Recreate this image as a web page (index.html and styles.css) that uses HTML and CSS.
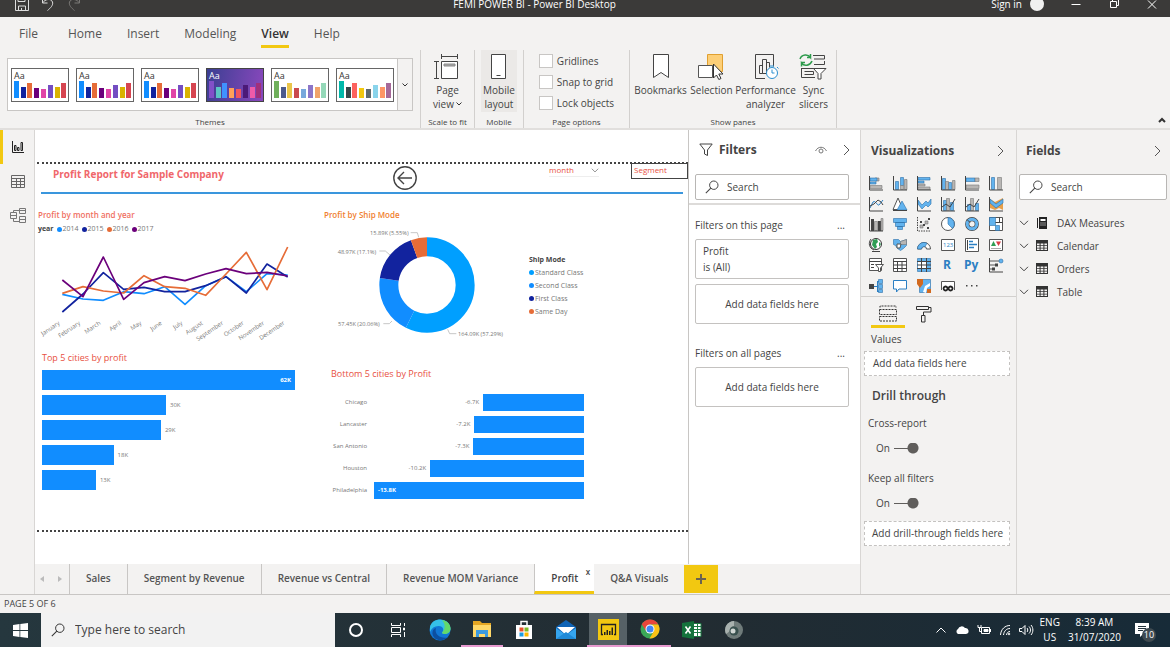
FILE: index.html
```html
<!DOCTYPE html>
<html lang="en">
<head>
<meta charset="utf-8">
<meta name="viewport" content="width=device-width, initial-scale=1">
<title>FEMI POWER BI - Power BI Desktop</title>
<link rel="stylesheet" href="styles.css">
</head>
<body>
<svg class="defs" aria-hidden="true">
  <symbol id="theme-default" viewBox="0 0 56 31"><path fill="#118dff" d="M2 12h5v17H2z"/><path fill="#12239e" d="M9 18h5v11H9z"/><path fill="#e66c37" d="M15 14h5v15h-5z"/><path fill="#6b007b" d="M22 19h5v10h-5z"/><path fill="#e044a7" d="M29 20h5v9h-5z"/><path fill="#744ec2" d="M36 16h5v13h-5z"/><path fill="#d9b300" d="M43 18h5v11h-5z"/><path fill="#d64550" d="M49 14h5v15h-5z"/></symbol>
  <symbol id="chev-right" viewBox="0 0 8 12"><path d="M1 1l5 5-5 5" fill="none" stroke="#555" stroke-width="1"/></symbol>
  <symbol id="chev-down" viewBox="0 0 10 6"><path d="M1 .8l4 4 4-4" fill="none" stroke="currentColor" stroke-width="1"/></symbol>
  <symbol id="lens" viewBox="0 0 14 14"><circle cx="8.8" cy="5.2" r="4.2" fill="none" stroke="currentColor" stroke-width="1"/><path d="M5.8 8.2L.8 13.2" stroke="currentColor" stroke-width="1.1"/></symbol>
  <symbol id="sheet" viewBox="0 0 12 11"><path fill="#333" d="M0 0h12v11H0z"/><path fill="#f3f2f1" d="M1 3.400h2.600v1.800H1zM4.600 3.400h2.800v1.800H4.600zM8.400 3.400H11v1.800H8.400zM1 6h2.600v1.700H1zM4.600 6h2.800v1.700H4.600zM8.400 6H11v1.700H8.400zM1 8.500h2.600V10H1zM4.600 8.500h2.800V10H4.600zM8.400 8.500H11V10H8.400z"/></symbol>
</svg>

<header class="titlebar">
  <div class="quick">
    <button aria-label="Save"><svg width="14" height="14" viewBox="0 0 14 14" fill="none" stroke="#ddd"><path d="M.5.500h11l2 2v11H.5zM3 .5v4h7v-4M3.500 13.500V9h7v4.500M6.500 11v2.500"/></svg></button>
    <button aria-label="Undo"><svg width="14" height="14" viewBox="0 0 14 14" fill="none" stroke="#ddd"><path d="M1.500 1v5h5M1.500 6C4 2 10 1 11.500 5c1 3-2 6-5 8.500"/></svg></button>
    <button aria-label="Redo"><svg width="14" height="14" viewBox="0 0 14 14" fill="none" stroke="#7a7876"><path d="M12.500 1v5h-5M12.500 6C10 2 4 1 2.500 5c-1 3 2 6 5 8.500"/></svg></button>
  </div>
  <h1 class="app-title">FEMI POWER BI - Power BI Desktop</h1>
  <div class="window">
    <a href="#signin">Sign in</a><span class="avatar"></span>
    <button aria-label="Minimize"><svg width="12" height="12" viewBox="0 0 12 12" fill="none" stroke="#fff"><path d="M1.500 6.500h9"/></svg></button>
    <button aria-label="Restore"><svg width="12" height="12" viewBox="0 0 12 12" fill="none" stroke="#fff"><path d="M2.500 3.500h6v6h-6zM4.500 3V1.500h6v6H9"/></svg></button>
    <button aria-label="Close"><svg width="12" height="12" viewBox="0 0 12 12" fill="none" stroke="#fff"><path d="M2 2.500l8 8M10 2.500l-8 8"/></svg></button>
  </div>
</header>

<nav class="menu">
  <a href="#file" class="file">File</a><a href="#home">Home</a><a href="#insert">Insert</a><a href="#modeling">Modeling</a><a href="#view" class="active">View</a><a href="#help">Help</a>
</nav>

<section class="ribbon">
  <div class="group themes">
    <div class="gallery">
      <button class="theme"><span>Aa</span><svg><use href="#theme-default"/></svg></button>
      <button class="theme"><span>Aa</span><svg><use href="#theme-default"/></svg></button>
      <button class="theme"><span>Aa</span><svg><use href="#theme-default"/></svg></button>
      <button class="theme purple"><span>Aa</span><svg viewBox="0 0 56 31"><path fill="#8250c8" d="M2 12h5v17H2z"/><path fill="#5cc5c5" d="M9 18h5v11H9z"/><path fill="#4092ff" d="M15 14h5v15h-5z"/><path fill="#ffa058" d="M22 19h5v10h-5z"/><path fill="#f0555e" d="M29 20h5v9h-5z"/><path fill="#4b1a78" d="M36 16h5v13h-5z"/><path fill="#ef5ba9" d="M43 18h5v11h-5z"/><path fill="#a0307c" d="M49 14h5v15h-5z"/></svg></button>
      <button class="theme"><span>Aa</span><svg viewBox="0 0 56 31"><path fill="#70b05c" d="M2 12h5v17H2z"/><path fill="#4c5a8c" d="M9 18h5v11H9z"/><path fill="#eac54a" d="M15 14h5v15h-5z"/><path fill="#c94a4e" d="M22 19h5v10h-5z"/><path fill="#77a8dc" d="M29 20h5v9h-5z"/><path fill="#8c75c8" d="M36 16h5v13h-5z"/><path fill="#f0a36a" d="M43 18h5v11h-5z"/><path fill="#94d8b8" d="M49 14h5v15h-5z"/></svg></button>
      <button class="theme"><span>Aa</span><svg viewBox="0 0 56 31"><path fill="#01b8aa" d="M2 12h5v17H2z"/><path fill="#374649" d="M9 18h5v11H9z"/><path fill="#fd625e" d="M15 14h5v15h-5z"/><path fill="#f2c80f" d="M22 19h5v10h-5z"/><path fill="#5f6b6d" d="M29 20h5v9h-5z"/><path fill="#8ad4eb" d="M36 16h5v13h-5z"/><path fill="#fe9666" d="M43 18h5v11h-5z"/><path fill="#a66999" d="M49 14h5v15h-5z"/></svg></button>
      <button class="more" aria-label="More themes"><svg width="6" height="4" viewBox="0 0 6 4"><path d="M.5.500L3 3 5.500.500" fill="none" stroke="#333"/></svg></button>
    </div>
    <div class="caption">Themes</div>
  </div>
  <div class="group scale">
    <button class="tool"><svg width="26" height="26" viewBox="0 0 26 26" fill="none" stroke="#444"><path d="M7 2.500h17M7.500 0v5M23.500 0v5M2.500 7v17M0 7.500h5M0 24.500h5"/><path fill="#fff" d="M7.500 7.500h16v17h-16z"/><path fill="#aaa" stroke="#888" d="M10 10h11v2H10z"/></svg>Page<br><span>view <svg width="6" height="4" viewBox="0 0 6 4"><path d="M.5.500L3 3 5.500.500" fill="none" stroke="#333"/></svg></span></button>
    <div class="caption">Scale to fit</div>
  </div>
  <div class="group mobile">
    <button class="tool shade"><svg width="16" height="26" viewBox="0 0 16 26" fill="#fff" stroke="#444"><path d="M.5.500h14v24H.5zM5.500 21.500h4"/></svg>Mobile<br>layout</button>
    <div class="caption">Mobile</div>
  </div>
  <div class="group options">
    <div class="checks">
      <label><input type="checkbox">Gridlines</label>
      <label><input type="checkbox">Snap to grid</label>
      <label><input type="checkbox">Lock objects</label>
    </div>
    <div class="caption">Page options</div>
  </div>
  <div class="group panes">
    <div class="tools">
      <button class="tool"><svg width="16" height="26" viewBox="0 0 16 26" fill="#fff" stroke="#444"><path d="M.5.500h15v23L8 18.500.5 23.500z"/></svg>Bookmarks</button>
      <button class="tool"><svg width="26" height="26" viewBox="0 0 26 26"><path fill="#fdcf77" stroke="#e0a030" d="M9.500.500h15v17h-15z"/><path fill="#fff" stroke="#555" d="M.5 11.500h14v12H.5z"/><path fill="#fff" stroke="#333" d="M15.500 10v14l3-3 2.300 4.500 2.200-1-2.200-4.500h4.200z"/></svg>Selection</button>
      <button class="tool"><svg width="26" height="26" viewBox="0 0 26 26" fill="none" stroke="#444"><path d="M12 24.500H2.500V.500h18v12"/><path d="M6.500 11.500h3v8h-3zM9.500 5.500h4v14h-4zM13.500 8.500h3v5"/><g stroke="#2b8fd0"><circle cx="19" cy="19" r="5.500" fill="#fff"/><path d="M19 15.500V19h2.500M17 12h4M24 13l1.500 1.500"/></g></svg>Performance<br>analyzer</button>
      <button class="tool"><svg width="28" height="26" viewBox="0 0 28 26" fill="none" stroke="#444"><path d="M14 1.500h11.500v3.500H15M15 10.500h10.500V7M2.500 14v9.500H16M2.500 14.500h14M5.500 17.500h9v3h-9"/><path fill="#fff" d="M14.500 14.500h12.500l-5 5v5.500h-3v-5.500z"/><g stroke="#2d9b4c" stroke-width="1.500"><path d="M1 5C3 0 9 0 11.500 3.500V0M11.500 3.500H8M13 7c-2 5-8 5.500-10.500 2V12.500M2.500 8.500H6"/></g></svg>Sync<br>slicers</button>
    </div>
    <div class="caption">Show panes</div>
  </div>
  <button class="collapse" aria-label="Collapse the ribbon"><svg width="8" height="6" viewBox="0 0 8 6"><path d="M1 5l3-3 3 3" fill="none" stroke="#333" stroke-width="2"/></svg></button>
</section>

<main class="workspace">
  <nav class="rail">
    <button class="active" aria-label="Report"><svg width="12" height="12" viewBox="0 0 12 12" fill="none" stroke="#222"><path d="M.5 0v11.500H12M2.500 4.500h1.500v5H2.500zM5.500 6.500H7v3H5.500zM9 1.500h1.500v8H9z"/></svg></button>
    <button aria-label="Data"><svg width="14" height="13" viewBox="0 0 14 13" fill="none" stroke="#666"><path d="M.5.500h13v12H.5zM0 3.500h14M0 6.500h14M0 9.500h14M5.500 3v10M9.500 3v10"/></svg></button>
    <button aria-label="Model"><svg width="16" height="15" viewBox="0 0 16 15" fill="none" stroke="#777"><path d="M.5 4.500h6v6h-6zM.5 7.500h6M9.500.500h6v5h-6zM9.500 2.500h6M9.500 8.500h6v6h-6zM9.500 11.500h6M3.500 4V2.500h6M3.500 11v2.500h6"/></svg></button>
  </nav>

  <div class="center">
    <div class="stage">
      <section class="canvas">
        <div class="page">
          <div class="report-head">
            <h2>Profit Report for Sample Company</h2>
            <button class="back" aria-label="Back"><svg width="24" height="24" viewBox="0 0 24 24" fill="none" stroke="#444" stroke-width="1.400"><circle cx="12" cy="12" r="11.200"/><path d="M19 12H5.500M11 6l-6 6 6 6"/></svg></button>
            <button class="month">month<svg width="8" height="5"><use href="#chev-down"/></svg></button>
            <div class="segment">Segment</div>
          </div>
          <div class="report-grid">
            <div class="col">
              <section class="visual lines">
                <h3>Profit by month and year</h3>
                <div class="legend"><b>year</b><span><i class="c1"></i>2014</span><span><i class="c3"></i>2015</span><span><i class="c4"></i>2016</span><span><i class="c5"></i>2017</span></div>
                <svg width="252" height="103" viewBox="114 330 756 309" role="img" aria-label="Profit by month and year">
                  <g fill="none" stroke-width="5" stroke-linejoin="round">
                    <path stroke="#118dff" d="M187 493L249 507 310 511 371 485 432 491 494 470 555 523 617 467 678 440 739 485 801 431 863 435"/>
                    <path stroke="#12239e" d="M187 546L249 492 310 428 371 478 432 472 494 485 555 485 617 467 678 440 739 489 801 402 863 441"/>
                    <path stroke="#e66c37" d="M187 490L249 470 310 483 371 489 432 437 494 470 555 475 617 496 678 432 739 367 801 479 863 351"/>
                    <path stroke="#6b007b" d="M187 450L249 500 310 381 371 508 432 458 494 440 555 452 617 432 678 416 739 431 801 427 863 438"/>
                  </g>
                  <g class="months">
                    <text transform="translate(181 582) rotate(-34)">January</text><text transform="translate(242 582) rotate(-34)">February</text><text transform="translate(303 582) rotate(-34)">March</text><text transform="translate(365 582) rotate(-34)">April</text><text transform="translate(426 582) rotate(-34)">May</text><text transform="translate(487 582) rotate(-34)">June</text><text transform="translate(549 582) rotate(-34)">July</text><text transform="translate(610 582) rotate(-34)">August</text><text transform="translate(671 582) rotate(-34)">September</text><text transform="translate(733 582) rotate(-34)">October</text><text transform="translate(794 582) rotate(-34)">November</text><text transform="translate(855 582) rotate(-34)">December</text>
                  </g>
                </svg>
              </section>
              <section class="visual top5">
                <h3>Top 5 cities by profit</h3>
                <div class="bar-row"><div class="bar" style="width:100%"><b>62K</b></div></div>
                <div class="bar-row"><div class="bar" style="width:49%"></div><span>30K</span></div>
                <div class="bar-row"><div class="bar" style="width:47%"></div><span>29K</span></div>
                <div class="bar-row"><div class="bar" style="width:28.300%"></div><span>18K</span></div>
                <div class="bar-row"><div class="bar" style="width:21.300%"></div><span>13K</span></div>
              </section>
            </div>
            <div class="col">
              <section class="visual ship">
                <h3>Profit by Ship Mode</h3>
                <div class="ship-body">
                  <svg width="184" height="120" viewBox="12 222 552 360" role="img" aria-label="Profit by Ship Mode">
                    <g fill="none" stroke-width="57" transform="rotate(-90 321 405)">
                      <circle cx="321" cy="405" r="114.500" pathLength="100" stroke="#009fff" stroke-dasharray="57.29 100"/>
                      <circle cx="321" cy="405" r="114.500" pathLength="100" stroke="#118dff" stroke-dasharray="20.06 100" stroke-dashoffset="-57.29"/>
                      <circle cx="321" cy="405" r="114.500" pathLength="100" stroke="#12239e" stroke-dasharray="17.1 100" stroke-dashoffset="-77.35"/>
                      <circle cx="321" cy="405" r="114.500" pathLength="100" stroke="#e66c37" stroke-dasharray="5.55 100" stroke-dashoffset="-94.45"/>
                    </g>
                    <path fill="none" stroke="#aaa" stroke-width="2" d="M272 248h20l4 14M178 303h18l14 12M190 521h18l8-8M383 538l6 13h20"/>
                    <g class="callouts"><text x="150" y="255">15.89K (5.55%)</text><text x="53" y="312">48.97K (17.1%)</text><text x="54" y="528">57.45K (20.06%)</text><text x="414" y="558">164.09K (57.29%)</text></g>
                  </svg>
                  <div class="ship-legend"><b>Ship Mode</b><span><i class="c0"></i>Standard Class</span><span><i class="c1"></i>Second Class</span><span><i class="c3"></i>First Class</span><span><i class="c4"></i>Same Day</span></div>
                </div>
              </section>
              <section class="visual bottom5">
                <h3>Bottom 5 cities by Profit</h3>
                <div class="neg-row"><span class="city">Chicago</span><div><span>-6.7K</span><div class="bar" style="width:48%"></div></div></div>
                <div class="neg-row"><span class="city">Lancaster</span><div><span>-7.2K</span><div class="bar" style="width:52.200%"></div></div></div>
                <div class="neg-row"><span class="city">San Antonio</span><div><span>-7.3K</span><div class="bar" style="width:52.700%"></div></div></div>
                <div class="neg-row"><span class="city">Houston</span><div><span>-10.2K</span><div class="bar" style="width:73.300%"></div></div></div>
                <div class="neg-row"><span class="city">Philadelphia</span><div><div class="bar" style="width:100%"><b>-13.8K</b></div></div></div>
              </section>
            </div>
          </div>
        </div>
      </section>

      <aside class="filters">
        <div class="pane-head"><svg width="14" height="14" viewBox="0 0 14 14" fill="none" stroke="#444"><path d="M.8 1h12.400L8.500 7v5.500l-3-1.500V7z"/></svg><h2>Filters</h2><button aria-label="Show pane to readers"><svg width="12" height="8" viewBox="0 0 12 8" fill="none" stroke="#777"><path d="M.5 5C3 0 9 0 11.500 5"/><circle cx="6" cy="5" r="2"/></svg></button><button aria-label="Collapse filters"><svg width="8" height="12"><use href="#chev-right"/></svg></button></div>
        <label class="search"><svg width="14" height="14"><use href="#lens"/></svg><input type="text" placeholder="Search" aria-label="Search filters"></label>
        <hr>
        <div class="filter-title">Filters on this page<button aria-label="More">...</button></div>
        <div class="card">Profit<br>is (All)</div>
        <div class="card drop">Add data fields here</div>
        <div class="filter-title second">Filters on all pages<button aria-label="More">...</button></div>
        <div class="card drop">Add data fields here</div>
      </aside>
    </div>
    <nav class="pages">
      <span class="arrows"><button aria-label="Previous"><svg width="4" height="6" viewBox="0 0 4 6"><path fill="#bbb" d="M4 0v6L0 3z"/></svg></button><button aria-label="Next"><svg width="4" height="6" viewBox="0 0 4 6"><path fill="#bbb" d="M0 0v6l4-3z"/></svg></button></span>
      <a href="#p1">Sales</a><a href="#p2">Segment by Revenue</a><a href="#p3">Revenue vs Central</a><a href="#p4">Revenue MOM Variance</a><a href="#p5" class="active">Profit<span class="close">x</span></a><a href="#p6">Q&amp;A Visuals</a>
      <button class="add" aria-label="New page"><svg width="10" height="10" viewBox="0 0 10 10"><path stroke="#6b6350" stroke-width="2" d="M5 0v10M0 5h10"/></svg></button>
    </nav>
  </div>

  <aside class="viz">
    <div class="pane-head"><h2>Visualizations</h2><button aria-label="Collapse visualizations"><svg width="8" height="12"><use href="#chev-right"/></svg></button></div>
    <div class="viz-grid">
      <svg viewBox="0 0 16 16"><path class="g" d="M2 10.500h12v3H2zM7 3h4v3H7z"/><path class="b" d="M2 3h7v3H2zM2 7h6v2H2z"/><path class="a" d="M1.500 1v14H15"/></svg>
      <svg viewBox="0 0 16 16"><path class="b" d="M3.500 6.500h3v8h-3zM8.500 2.500h3v8h-3z"/><path class="g" d="M8.500 10.500h3v4h-3zM12.500 4.500H15v10h-2.500z"/><path class="a" d="M1.500 1v14H15"/></svg>
      <svg viewBox="0 0 16 16"><path class="b" d="M2 2.500h12v2.500H2zM2 6h6v2H2z"/><path class="g" d="M2 9h7v2H2zM2 12h12v2.500H2z"/><path class="a" d="M1.500 1v14H15"/></svg>
      <svg viewBox="0 0 16 16"><path class="b" d="M2.500 3.500h3v11h-3zM8.500 7.500h3v7h-3z"/><path class="g" d="M5.500 6.500h3v8h-3zM12.500 5.500H15v9h-2.500z"/><path class="a" d="M1.500 1v14H15"/></svg>
      <svg viewBox="0 0 16 16"><path class="b" d="M2 3h9v3.500H2z"/><path class="g" d="M11 3h4v3.500h-4zM2 10h13v3.500H2z"/><path class="a" d="M1.500 1v14H15"/></svg>
      <svg viewBox="0 0 16 16"><path class="b" d="M3.500 2.500h3v12h-3z"/><path class="g" d="M9.500 2.500h4v12h-4z"/><path class="a" d="M1.500 1v14H15"/></svg>

      <svg viewBox="0 0 16 16"><path class="l" d="M2 12l3-6c3-2 4 4 6 3l4-5"/><path class="n" d="M2 10l4-2 4-4 3 2 2 3"/><path class="a" d="M1.500 1v14H15"/></svg>
      <svg viewBox="0 0 16 16"><path class="w" d="M1 13.500L6 2l5 11.500z"/><path class="b" d="M5 14l5-9 5 9z"/><path class="a" d="M1 14.500h14"/></svg>
      <svg viewBox="0 0 16 16"><path class="b" d="M2 4l4 5 4-4 2 2 3-4v5l-3 3-2-2-4 4-4-5z"/><path class="a" d="M1.500 1v14H15"/></svg>
      <svg viewBox="0 0 16 16"><path class="b" d="M3.500 4.500h3v10h-3zM10.500 6.500h3v8h-3z"/><path class="g" d="M6.500 2.500h3v12h-3z"/><path class="n" d="M2 11l4-3 4 3 5-8"/><path class="a" d="M1.500 1v14H15"/></svg>
      <svg viewBox="0 0 16 16"><path class="g" d="M6.500 2.500h3v12h-3z"/><path class="b" d="M3.500 8.500h3v6h-3zM11.500 7.500h3v7h-3z"/><path class="n" d="M2 11l4-3 4 3 5-8"/><path class="a" d="M1.500 1v14H15"/></svg>
      <svg viewBox="0 0 16 16"><path class="o" d="M2 3l5 3 8-4v12l-4-2-4 2-5-2z"/><path class="b" d="M2 3l6 5 7-5v4l-7 5-6-5z"/><path class="a" d="M1.500 1v14H15"/></svg>

      <svg viewBox="0 0 16 16"><path class="d" d="M3 3h3v12H3zM10 5h3v10h-3z"/><path class="g" d="M6.500 5.500h3v9h-3zM13 2.500h2v12h-2z"/><path class="a" d="M1.500 1v14H15"/></svg>
      <svg viewBox="0 0 16 16"><path class="b" d="M1.500 2.500h13v4h-13zM3.500 6.500h9v4h-9zM5.500 10.500h5v3h-5z"/></svg>
      <svg viewBox="0 0 16 16"><path class="g" d="M4 9h3v3H4zM9 5h3v3H9z"/><path class="d" d="M4 5h2v2H4zM7 8h2v2H7zM11 11h2v2h-2zM12 2h2v2h-2z"/><path class="a" d="M1.500 1v14H15" stroke-dasharray="1.500 1"/></svg>
      <svg viewBox="0 0 16 16"><circle class="w" cx="8" cy="8" r="6.500"/><path class="b" d="M8 1.500A6.500 6.500 0 0 1 12.500 12.500L8 8z"/></svg>
      <svg viewBox="0 0 16 16"><circle cx="8" cy="8" r="4.800" fill="none" stroke="#444" stroke-width="4.200"/><circle cx="8" cy="8" r="4.800" fill="none" stroke="#62b3ee" stroke-width="3"/><path d="M3 3.500l3 3" stroke="#444"/></svg>
      <svg viewBox="0 0 16 16"><path class="w" d="M1.500 1.500h13v13h-13z"/><path class="b" d="M1.500 1.500h6v8h-6zM7.500 9.500h4v5h-4z"/><path class="a" d="M7.500 6.500h7M11.500 1.500v5"/></svg>

      <svg viewBox="0 0 16 16"><circle cx="8" cy="7" r="5.500" fill="#fff" stroke="#333"/><path fill="#2f9e55" d="M5 3l4-1 1 3-2 2 1 3-2 2-3-4zM11 5l2 2-2 3z"/><path class="a" d="M4 14.500h8M3 2C0 6 1 11 6 13"/></svg>
      <svg viewBox="0 0 16 16"><path class="b" d="M1.500 2.500h5l2 2 6-2v6l-3 3-3 2-3-2-2-3-2-1z"/><path class="g" d="M8.500 4.500l6-2v5h-6z"/><path class="w" d="M5 7h4l-1 4H5z"/></svg>
      <svg viewBox="0 0 16 16"><path class="w" d="M1.500 12a6.500 6.500 0 0 1 13 0h-4a2.500 2.500 0 0 0-5 0z"/><path class="b" d="M1.500 12A6.500 6.500 0 0 1 11 6.200L9 9.800A2.500 2.500 0 0 0 5.500 12z"/></svg>
      <svg viewBox="0 0 16 16"><path class="w" d="M1.500 2.500h13v11h-13z"/><text class="num" x="3" y="10">123</text></svg>
      <svg viewBox="0 0 16 16"><path class="w" d="M1.500 1.500h13v13h-13z"/><path d="M5 4.500h4M5 7.500h8M5 10.500h5" stroke="#2b7fc3" stroke-width="1.600"/><path class="a" d="M3.500 3v10"/></svg>
      <svg viewBox="0 0 16 16"><path class="w" d="M1.500 2.500h13v11h-13z"/><path fill="#2f9e55" d="M3 9l2.500-5L8 9z"/><path fill="#d83b45" d="M8 4.500h5L10.500 9z"/><path d="M3 11.500h10" stroke="#aaa"/></svg>

      <svg viewBox="0 0 16 16"><path class="w" d="M1.500 1.500h12v12h-12z"/><path class="a" d="M1 4.500h13M3 7.500h3M3 10.500h3"/><path class="w" d="M7.500 7.500h8l-3 3.500v3.500h-2V11z"/></svg>
      <svg viewBox="0 0 16 16"><path class="w" d="M1.500 1.500h13v13h-13z"/><path class="a" d="M1 4.500h14M1 8h14M1 11.500h14M5.500 4v11M10 4v11"/></svg>
      <svg viewBox="0 0 16 16"><path class="b" d="M1.500 1.500h13v13h-13z"/><path fill="#fff" d="M2 5h8v6H2z"/><path class="a" d="M1 4.500h14M1 8h14M1 11.500h14M5.500 1v14M10.500 1v14"/></svg>
      <svg viewBox="0 0 16 16"><text class="lang" x="3" y="12">R</text></svg>
      <svg viewBox="0 0 16 16"><text class="lang" x="0" y="12">Py</text></svg>
      <svg viewBox="0 0 16 16"><path d="M2 4h10M2 8h7M2 12h4" stroke="#555"/><path class="d" d="M7 6.500h3v3H7zM4 10.500h3v3H4z"/><circle class="b" cx="13" cy="4" r="2"/><path class="a" d="M1.500 1v14H15"/></svg>

      <svg viewBox="0 0 16 16"><path class="d" d="M1 6h5v5H1z"/><path class="l" d="M6 8.500h3M9.500 3v11M9.500 3.500h2M9.500 13.500h2"/><path class="b" d="M10.500 1.500h4v4h-4zM10.500 6.500h4v4h-4zM10.500 11.500h4v3h-4z"/></svg>
      <svg viewBox="0 0 16 16"><path fill="#fff" stroke="#2b7fc3" d="M1.500 2.500h13v8.500H7L4.500 14v-3h-3z"/></svg>
      <svg viewBox="0 0 16 16"><path class="b" d="M3.500 1.500h11v13h-11z"/><path fill="#fff" d="M7 14l2-6 5-3v3l-3 2-1 5z"/><path fill="#d2691e" d="M1 1h6v5l-3 4-3-4zM11 11h4v4h-4z"/></svg>
      <svg viewBox="0 0 16 16"><path class="w" d="M1.500 12V3.500h13V12"/><path fill="none" stroke="#222" stroke-width="1.800" d="M5.500 8.500a2 2 0 1 0 .1 0zM10.500 8.500a2 2 0 1 0 .1 0z"/></svg>
      <button class="dots" aria-label="Get more visuals"><svg viewBox="0 0 16 16"><path class="d" d="M2 7h1.500v1.500H2zM7 7h1.500v1.500H7zM12 7h1.500v1.500H12z"/></svg></button>
    </div>
    <div class="viz-tabs">
      <button class="active" aria-label="Fields"><svg width="18" height="17" viewBox="0 0 18 17" fill="none" stroke="#333" stroke-dasharray="2 1"><path d="M1 2.500V1h16v1.500M.5 4.500h17v5H.5zM.5 11.500h17v4.500H.5z"/></svg></button>
      <button aria-label="Format"><svg width="16" height="18" viewBox="0 0 16 18" fill="none" stroke="#333"><path d="M.5 1.500h12v3H.5zM12.500 2.500H15v4.500H7.500v3M5.500 10.500h3.500v6.500H5.500z"/></svg></button>
    </div>
    <div class="well-title">Values</div>
    <div class="well">Add data fields here</div>
    <h2 class="drill">Drill through</h2>
    <div class="switch-title">Cross-report</div>
    <label class="switch">On<input type="checkbox" role="switch" checked></label>
    <div class="switch-title">Keep all filters</div>
    <label class="switch">On<input type="checkbox" role="switch" checked></label>
    <div class="well last">Add drill-through fields here</div>
  </aside>

  <aside class="fields">
    <div class="pane-head"><h2>Fields</h2><button aria-label="Collapse fields"><svg width="8" height="12"><use href="#chev-right"/></svg></button></div>
    <label class="search"><svg width="14" height="14"><use href="#lens"/></svg><input type="text" placeholder="Search" aria-label="Search fields"></label>
    <ul>
      <li><svg width="10" height="6"><use href="#chev-down"/></svg><svg width="12" height="12" viewBox="0 0 12 12"><path fill="#222" d="M1 1h1v10H1zM3 0h8v12H3z"/><path fill="#fff" d="M4.500 2h5v2h-5zM4.500 5.500h1v1h-1zM6.500 5.500h1v1h-1zM8.500 5.500h1v1h-1zM4.500 7.500h1v1h-1zM6.500 7.500h1v1h-1zM8.500 7.500h1v1h-1z"/></svg>DAX Measures</li>
      <li><svg width="10" height="6"><use href="#chev-down"/></svg><svg width="12" height="11"><use href="#sheet"/></svg>Calendar</li>
      <li><svg width="10" height="6"><use href="#chev-down"/></svg><svg width="12" height="11"><use href="#sheet"/></svg>Orders</li>
      <li><svg width="10" height="6"><use href="#chev-down"/></svg><svg width="12" height="11"><use href="#sheet"/></svg>Table</li>
    </ul>
  </aside>
</main>

<div class="status">PAGE 5 OF 6</div>

<footer class="taskbar">
  <button class="start" aria-label="Start"><svg width="15" height="15" viewBox="0 0 15 15" fill="#fff"><path d="M0 2l6.500-1v6H0zM7.300.9L15 0v7H7.300zM0 8h6.500v6L0 13zM7.300 8H15v7l-7.700-1z"/></svg></button>
  <label class="task-search"><svg width="14" height="14"><use href="#lens"/></svg><input type="text" placeholder="Type here to search" aria-label="Type here to search"></label>
  <div class="apps">
    <button aria-label="Cortana"><svg width="20" height="20" viewBox="0 0 20 20"><circle cx="10" cy="10" r="6" fill="none" stroke="#fff" stroke-width="2"/></svg></button>
    <button aria-label="Task view"><svg width="16" height="14" viewBox="0 0 16 14" fill="none" stroke="#fff"><path d="M1.500 0v2.500h9V0M1.500 4.500h9v5h-9zM1.500 14v-2.500h9V14M14.500 0v3M14.500 9v5"/><path fill="#fff" d="M13.500 5h1v2h-1z"/></svg></button>
    <button aria-label="Edge"><svg width="22" height="22" viewBox="0 0 22 22"><circle cx="11" cy="11" r="10.500" fill="#1177d4"/><path fill="#35c1e8" d="M1 8C3-2 20-2 21.500 9c0 4-3 6-6 6-2 0-3-1-2-2 2-3 0-6-4-6-4 0-7 2-8.500 6z"/><path fill="#63d96b" d="M13 1c6 1 8.500 5 8.500 8.500 0 4-3 5.500-6 5.500-2 0-3-1-2-2 3-3 3-8-.5-12z"/><path fill="#0c4fa0" d="M7 9c-2 6 4 11 11 9.500C14 23 5 22 3.500 15 3 11.500 5 9.500 7 9z"/></svg></button>
    <button class="open" aria-label="File Explorer"><svg width="20" height="18" viewBox="0 0 20 18"><path fill="#e5a623" d="M1 1h7l2 2h9v14H1z"/><path fill="#ffd869" d="M1 5h18v12H1z"/><path fill="#3d9be0" d="M4 10h12v7h-3v-3H7v3H4z"/></svg></button>
    <button aria-label="Store"><svg width="20" height="20" viewBox="0 0 20 20"><path fill="none" stroke="#fff" stroke-width="1.500" d="M7 5V1.500h6V5"/><path fill="#fff" d="M2 5h16v14H2z"/><path fill="#e8502a" d="M5.500 7.500h4v4h-4z"/><path fill="#7cb928" d="M10.500 7.500h4v4h-4z"/><path fill="#1b9de2" d="M5.500 12.500h4v4h-4z"/><path fill="#fbb900" d="M10.500 12.500h4v4h-4z"/></svg></button>
    <button aria-label="Mail"><svg width="22" height="20" viewBox="0 0 22 20"><path fill="#0f63b5" d="M1 7l10-7 10 7v12H1z"/><path fill="#fff" d="M2 7h18l-9 8z"/><path fill="#35a5ee" d="M1 8l10 7 10-7v11H1z"/><path fill="#1f8ad8" d="M1 19l10-7 10 7z"/></svg></button>
    <button class="open current" aria-label="Power BI Desktop"><svg width="21" height="21" viewBox="0 0 21 21"><path fill="#f2c811" d="M0 0h21v21H0z"/><path fill="none" stroke="#222" stroke-width="1.300" d="M5 15.500H3.500v-10h14v10H16"/><path fill="#222" d="M6 13h1.500v3H6zM8.500 11H10v5H8.500zM11 12h1.500v4H11zM13.500 8.500H15V16h-1.500z"/></svg></button>
    <button class="open" aria-label="Chrome"><svg width="20" height="20" viewBox="0 0 20 20"><circle cx="10" cy="10" r="9.500" fill="#3ba757"/><path fill="#e8453c" d="M1.800 5.300A9.500 9.500 0 0 1 18.300 5.500H10L6 12z"/><path fill="#fbc116" d="M18.300 5.500A9.500 9.500 0 0 1 9.500 19.500l4.500-7.500-2-6.500z"/><circle cx="10" cy="10" r="4.500" fill="#fff"/><circle cx="10" cy="10" r="3.500" fill="#4285f4"/></svg></button>
    <button aria-label="Excel"><svg width="20" height="18" viewBox="0 0 20 18"><path fill="#fff" stroke="#1f7a45" d="M11 2.500h8v13h-8z"/><path stroke="#1f7a45" d="M12 5.500h7M12 8.500h7M12 11.500h7M15.500 3v12"/><path fill="#14723c" d="M0 2l12-2v18L0 16z"/><path stroke="#fff" stroke-width="1.600" d="M3.500 5.500l5 7M8.500 5.500l-5 7"/></svg></button>
    <button aria-label="Recorder"><svg width="20" height="20" viewBox="0 0 20 20"><circle cx="10" cy="10" r="9" fill="#6f7b7a"/><path fill="#a8b1ae" d="M10 1a9 9 0 0 0-8 13l4-3a4 4 0 0 1 4-5z"/><circle cx="10" cy="11" r="4.500" fill="#38504e"/><circle cx="9" cy="11" r="2.500" fill="#d0d6d4"/></svg></button>
  </div>
  <div class="tray">
    <svg width="12" height="12" viewBox="0 0 12 12" fill="none" stroke="#fff"><path d="M1.500 8.500L6 4l4.500 4.500"/></svg>
    <svg width="14" height="12" viewBox="0 0 14 12"><path fill="#fff" d="M3 10a2.800 2.800 0 0 1 0-5 4 4 0 0 1 7-1 3 3 0 0 1 1 6z"/></svg>
    <svg width="14" height="12" viewBox="0 0 14 12" fill="none" stroke="#fff"><path d="M4.500 3.500h8v6h-8zM13.500 5v3M1 1v2.500h3V1M2.500 3.500v4h2"/><path fill="#fff" d="M7 5.500h4v2H7z"/></svg>
    <svg width="12" height="12" viewBox="0 0 12 12" fill="none" stroke="#fff"><path d="M1.500 11C2 5 6 1.500 11 1.500M4.500 11c.5-4 3-6.500 6.500-6.500M7.500 11c.3-2 1.500-3.500 3.500-3.500"/><circle cx="10" cy="10" r=".8"/></svg>
    <svg width="15" height="12" viewBox="0 0 15 12" fill="none" stroke="#fff"><path d="M.5 4.500H3l3-3v9l-3-3H.5zM8 4c1 1 1 3 0 4M10 2.500c2 2 2 5 0 7M12 1c2.500 3 2.500 7 0 10"/></svg>
    <span class="lang-id">ENG<br>US</span>
    <time>8:39 AM<br>31/07/2020</time>
    <button class="notes" aria-label="10 notifications"><svg width="15" height="15" viewBox="0 0 15 15"><path fill="#fff" d="M0 0h14v11H8l-3 3v-3H0z"/><path stroke="#25343d" d="M3 3.500h8M3 5.500h8M3 7.500h5"/></svg><span>10</span></button>
  </div>
</footer>
</body>
</html>
```
FILE: styles.css
```css
* { box-sizing: border-box; }
body {
  margin: 0;
  min-height: 100vh;
  display: flex;
  flex-direction: column;
  font: 10px/16px "Open Sans", "Noto Sans", sans-serif;
  color: #444;
  background: #f3f2f1;
}
button { font: inherit; color: inherit; background: none; border: 0; padding: 0; }
a { color: inherit; text-decoration: none; }
h1, h2, h3 { margin: 0; font-weight: 600; }
svg { display: block; flex: none; }
input { font: inherit; min-width: 0; }
.defs { position: absolute; width: 0; height: 0; }

/* Title bar */
.titlebar { height: 17px; padding: 0 12px 4px 15px; display: grid; grid-template-columns: 1fr auto 1fr; align-content: end; overflow: hidden; background: #3b3a39; color: #fff; }
.titlebar > * { height: 18px; align-items: center; }
.quick { display: flex; gap: 12px; }
.app-title { font-size: 10px; line-height: 18px; font-weight: 400; margin-right: 104px; }
.window { display: flex; justify-content: flex-end; gap: 26px; font-size: 10px; }
.window .avatar { width: 14px; height: 14px; border-radius: 50%; background: #f0f0f0; margin-left: -18px; }

/* Menu */
.menu { height: 33px; padding-left: 19px; display: flex; gap: 25px; font-size: 12px; line-height: 18px; align-items: flex-start; color: #555; }
.menu a { padding: 8px 0 2px; border-bottom: 3px solid transparent; }
.menu .file { margin-right: 5px; }
.menu .active { font-weight: 600; color: #333; border-color: #f2c811; }

/* Ribbon */
.ribbon { height: 80px; display: flex; border-bottom: 2px solid #e1dfdd; }
.group { display: flex; flex-direction: column; align-items: center; justify-content: space-between; border-right: 1px solid #d2d0ce; }
.caption { font-size: 8px; line-height: 12px; }
.themes { width: 421px; padding: 8px 7px 0; }
.gallery { width: 100%; height: 53px; background: #fff; border: 1px solid #c8c6c4; display: flex; align-items: center; gap: 7px; padding-left: 3px; }
.theme { width: 58px; height: 34px; border: 1px solid #666; background: #fff; position: relative; flex: none; color: #333; }
.theme span { position: absolute; left: 2px; top: 1px; font-size: 9px; line-height: 12px; }
.theme svg { width: 56px; height: 31px; }
.purple { background: linear-gradient(100deg, #3b3f92, #8a48bd); color: #fff; border-color: #444; }
.more { align-self: stretch; flex: 1; margin-left: -4px; border-left: 1px solid #c8c6c4; background: #f3f2f1; display: grid; place-items: center; }
.tool { text-align: center; line-height: 14px; padding-top: 4px; white-space: nowrap; }
.tool > svg { margin: 0 auto 3px; }
.tool span { display: flex; align-items: center; gap: 2px; }
.scale { width: 54px; }
.mobile { width: 49px; }
.shade { background: #ebe9e7; width: 36px; height: 62px; padding-top: 2px; }
.options { width: 106px; }
.checks { display: grid; gap: 5px; padding-top: 3px; }
.checks label { display: flex; align-items: center; gap: 4px; height: 16px; }
.checks input { appearance: none; width: 14px; height: 14px; margin: 0; background: #fff; border: 1px solid #c8c6c4; }
.panes { width: 207px; }
.tools { display: grid; grid-template-columns: 52px 48px 58px 36px; gap: 1px; align-items: start; justify-items: center; }
.collapse { margin: auto 4px 5px auto; }

/* Workspace */
.workspace { flex: 1; display: flex; min-height: 463px; }
.rail { width: 35px; border-right: 1px solid #d8d6d4; display: flex; flex-direction: column; }
.rail button { height: 34px; display: grid; place-items: center; border-left: 3px solid transparent; padding-right: 2px; }
.rail .active { border-color: #f2c811; }
.center { flex: 1; display: flex; flex-direction: column; min-width: 0; }
.stage { flex: 1; display: flex; background: #fff; }
.canvas { flex: 1; min-width: 0; padding: 32px 0; }
.page { height: 370px; margin-left: 2px; border: dotted #444; border-width: 2px 0; }
.report-head { height: 30px; margin: 0 5px 0 4px; border-bottom: 2px solid #3a96dd; display: grid; grid-template-columns: 352px 156px 1fr auto; align-items: center; }
.report-head h2 { padding: 0 0 10px 12px; font-size: 10px; font-weight: 700; color: #f0676b; }
.back { justify-self: start; padding-bottom: 2px; }
.month { justify-self: start; width: 50px; margin-bottom: 16px; display: flex; justify-content: space-between; align-items: center; font-size: 8px; line-height: 12px; color: #e8503f; border-bottom: 1px solid #eee; }
.month svg { color: #777; }
.segment { align-self: start; width: 57px; margin: -1px -5px 0 0; padding: 0 0 2px 2px; border: 1px solid #444; font-size: 8px; line-height: 12px; color: #e8503f; }
.report-grid { display: grid; grid-template-columns: 286fr 364fr; padding-left: 1px; }
.visual h3 { font-size: 8px; line-height: 14px; color: #f0705f; }
.lines { padding-top: 14px; }
.legend { display: flex; gap: 3px; margin-top: 2px; font-size: 7px; line-height: 10px; color: #777; }
.legend span, .ship-legend span { display: flex; align-items: center; gap: 1px; }
.legend b { color: #444; }
.visual i { width: 5px; height: 5px; border-radius: 50%; }
.c0 { background: #009fff; }
.c1 { background: #118dff; }
.c3 { background: #12239e; }
.c4 { background: #e66c37; }
.c5 { background: #6b007b; }
.lines svg { margin-top: 6px; }
.months text { font-size: 18px; text-anchor: end; fill: #777; }
.top5 { padding: 8px 0 0 4px; width: 257px; }
.visual.top5 h3, .visual.bottom5 h3 { color: #e8503f; font-weight: 400; font-size: 9px; }
.top5 h3 { margin-bottom: 5px; }
.bar-row { display: flex; gap: 4px; height: 20px; margin-bottom: 5px; align-items: center; font-size: 6px; color: #777; }
.bar { height: 100%; background: #118dff; color: #fff; flex: none; display: flex; align-items: center; }
.bar-row b { margin: 0 4px 0 auto; }
.ship { padding-top: 14px; }
.visual.ship h3 { color: #f08030; font-weight: 600; }
.ship-body { display: flex; gap: 21px; margin-top: 2px; }
.callouts text { font-size: 17px; fill: #777; }
.ship-legend { padding-top: 29px; font-size: 7px; line-height: 13px; color: #777; }
.ship-legend b { color: #444; }
.bottom5 { padding: 23px 0 0 7px; width: 260px; }
.bottom5 h3 { margin-bottom: 13px; }
.neg-row { display: grid; grid-template-columns: 36px 1fr; gap: 7px; height: 17px; margin-bottom: 5px; font-size: 6px; line-height: 17px; color: #777; }
.city { justify-self: end; white-space: nowrap; }
.neg-row > div { display: flex; justify-content: flex-end; gap: 4px; }
.neg-row b { margin-left: 4px; }

/* Panes */
.filters { width: 172px; border-left: 1px solid #c8c6c4; padding: 0 11px 0 6px; }
.pane-head { display: flex; align-items: center; height: 40px; gap: 8px; }
.pane-head h2 { font-size: 12px; line-height: 18px; margin-right: auto; font-weight: 700; }
.filters .pane-head { margin-right: -2px; padding-left: 4px; gap: 6px; }
.filters .pane-head button + button { margin-left: 10px; }
.search { height: 26px; margin-top: 4px; display: flex; align-items: center; gap: 8px; padding-left: 9px; border: 1px solid #b8b6b4; border-radius: 2px; background: #fff; }
.search input, .task-search input { flex: 1; width: 0; border: 0; padding: 0; background: none; outline: 0; color: #444; }
.search input::placeholder, .task-search input::placeholder { color: #444; opacity: 1; }
.filters hr { margin: 3px -11px 12px -6px; border: 0; height: 2px; background: #dddbd9; }
.filter-title { display: flex; justify-content: space-between; padding-right: 4px; margin-bottom: 6px; }
.second { margin-top: 21px; }
.card { height: 40px; border: 1px solid #c4c2c0; border-radius: 2px; padding: 3px 7px; margin-bottom: 5px; }
.drop { display: grid; place-items: center; }
.viz { width: 156px; border-left: 1px solid #d8d6d4; padding: 0 6px 0 3px; display: flex; flex-direction: column; }
.viz .pane-head, .fields .pane-head { height: 41px; padding: 0 5px 0 7px; }
.viz-grid { height: 123px; margin: 2px 0 0 4px; display: grid; grid-template: repeat(6, 1fr) / repeat(6, 24px); align-items: center; }
.viz-grid svg { width: 16px; height: 16px; }
.a, .l, .n { fill: none; stroke: #444; }
.b { fill: #62b3ee; stroke: #2b6ea8; stroke-width: .6; }
.g { fill: #b8b6b4; stroke: #777; stroke-width: .6; }
.w { fill: #fff; stroke: #555; }
.d { fill: #444; }
.viz-grid .l { stroke: #2b7fc3; }
.o { fill: #e8a04a; }
.num { font-size: 6px; fill: #2b7fc3; }
.lang { font-size: 12px; font-weight: 700; fill: #2b7fc3; }
.dots { justify-self: start; }
.viz-tabs { display: flex; gap: 2px; margin: 0 -6px 0 -3px; padding: 8px 0 0 10px; border-top: 1px solid #d2d0ce; }
.viz-tabs button { width: 34px; height: 23px; display: flex; justify-content: center; align-items: flex-start; border-bottom: 3px solid transparent; }
.viz-tabs .active { border-color: #f2c811; }
.well-title { margin: 3px 7px 4px; }
.well { height: 25px; border: 1px dashed #c4c2c0; background: #fff; padding-left: 8px; line-height: 23px; white-space: nowrap; }
.drill { font-size: 12px; line-height: 18px; margin: 11px 8px 10px; }
.switch-title { padding-left: 4px; margin-bottom: 9px; }
.switch { display: flex; align-items: center; gap: 4px; padding-left: 12px; margin-bottom: 14px; }
.switch input { appearance: none; width: 25px; height: 11px; margin: 0; background: radial-gradient(circle at 19px 5px, #605e5c 5px, transparent 6px), linear-gradient(#605e5c, #605e5c) 0 5px / 19px 1px no-repeat; }
.last { margin-top: -4px; padding-left: 7px; }
.fields { width: 154px; border-left: 1px solid #d8d6d4; padding: 0 3px 0 2px; }
.fields .search { margin-top: 3px; }
.fields ul { list-style: none; margin: 11px 0 0; padding: 0; }
.fields li { display: flex; align-items: center; height: 23px; gap: 7px; }
.fields li svg + svg { margin-right: 2px; }

/* Page tabs, status */
.pages { height: 30px; display: flex; background: #f3f2f1; line-height: 29px; font-weight: 600; color: #555; }
.pages a { padding: 0 16px; border-left: 1px solid #c8c6c4; position: relative; white-space: nowrap; }
.pages .active { background: #fff; border-bottom: 3px solid #f2c811; color: #444; }
.pages .active + a { border-left: 0; }
.close { position: absolute; right: 4px; top: 2px; font-size: 8px; line-height: 12px; }
.arrows { width: 34px; display: flex; justify-content: space-between; padding: 0 7px 0 5px; }
.add { width: 34px; height: 28px; margin-top: 1px; display: grid; place-items: center; background: #f2c811; }
.status { height: 19px; border-top: 1px solid #c8c6c4; padding-left: 4px; font-size: 9px; line-height: 18px; }

/* Taskbar */
.taskbar { height: 35px; display: flex; background: linear-gradient(90deg, #25373e, #222c32 60%, #172b38); border-bottom: 1px solid #000; color: #fff; }
.start { width: 41px; display: grid; place-items: center; }
.task-search { width: 294px; background: #f2f2f2; color: #333; display: flex; align-items: center; gap: 10px; padding-left: 10px; font-size: 12px; }
.apps { display: flex; }
.apps button { width: 42px; display: grid; place-items: center; background-clip: content-box; padding: 0 2px; }
.apps .open { border-bottom: 2px solid #e79ad0; }
.apps .current { background-color: #566166; }
.tray { margin-left: auto; display: flex; align-items: center; gap: 8px; padding-right: 14px; text-align: center; line-height: 15px; }
.lang-id { margin-left: -2px; }
.notes { position: relative; margin-left: 6px; padding: 0 6px 0 0; }
.notes span { position: absolute; left: 7px; top: 5px; width: 14px; height: 14px; border-radius: 50%; background: #3f4a50; font-size: 9px; line-height: 14px; }
```
